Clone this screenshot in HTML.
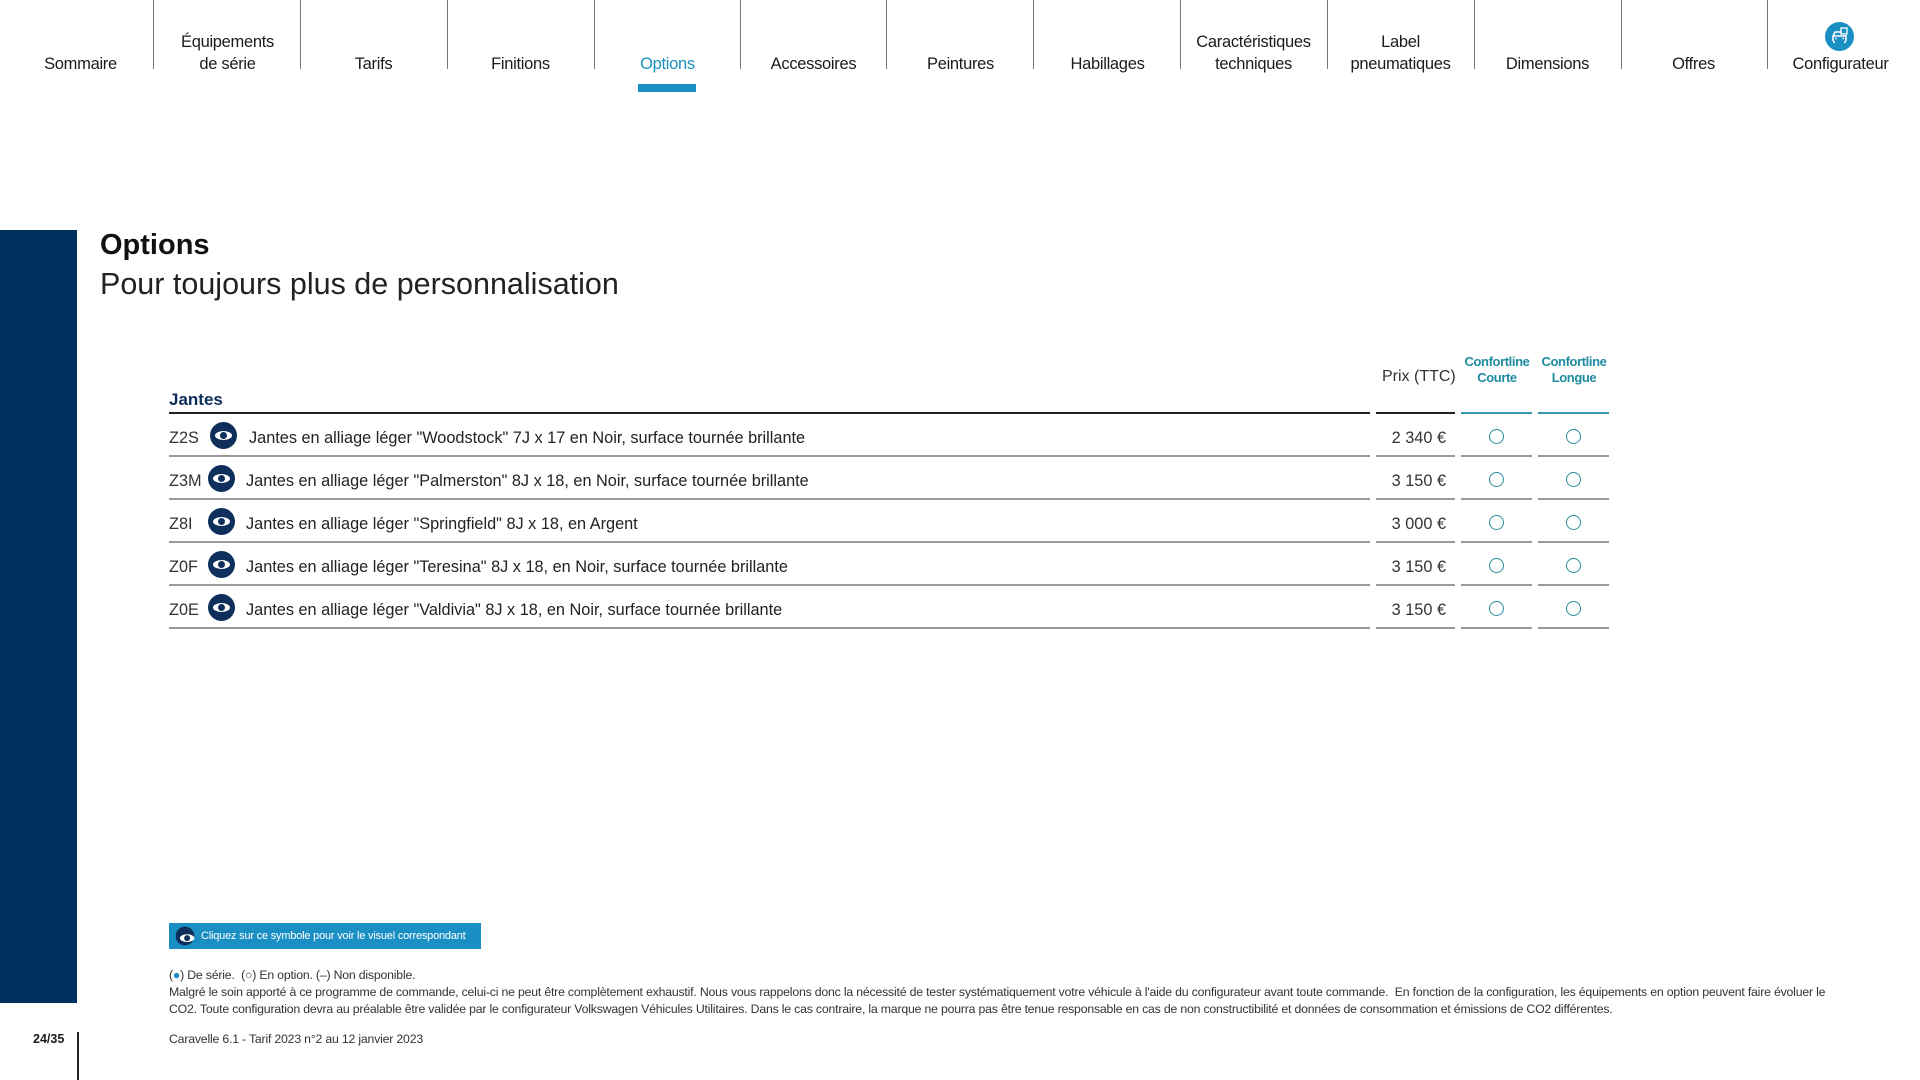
<!DOCTYPE html>
<html><head><meta charset="utf-8"><style>
*{margin:0;padding:0;box-sizing:border-box}
body{width:1920px;height:1080px;background:#fff;font-family:"Liberation Sans",sans-serif;color:#1b1b1b;position:relative;overflow:hidden}
.nav{position:absolute;top:0;left:0;width:1920px;height:100px}
.it{position:absolute;top:0;width:147px;height:75px;text-align:center;font-size:16.5px;line-height:22px;letter-spacing:-0.3px;display:flex;flex-direction:column;justify-content:flex-end}
.sep{position:absolute;top:0;width:1px;height:69px;background:#777}
.a{position:absolute;font-size:16.3px;white-space:nowrap}
.ln{position:absolute;height:2px;background:#999}
.eye{position:absolute;width:27px;height:27px;border-radius:50%;background:#0e2f5c}
.eye:before{content:"";position:absolute;left:5px;top:9px;width:17px;height:9px;border-radius:50%;background:#fff}
.eye:after{content:"";position:absolute;left:10px;top:10px;width:7px;height:7px;border-radius:50%;background:#0e2f5c}
.c{position:absolute;width:15px;height:15px;border:1.5px solid #2a8f9c;border-radius:50%}
.sm{position:absolute;left:169px;font-size:12.3px;color:#333;white-space:nowrap;letter-spacing:-0.2px}
</style></head><body>
<div class="nav">
<div class="it" style="left:7px">Sommaire</div>
<div class="it" style="left:154px">Équipements<br>de série</div>
<div class="it" style="left:300px">Tarifs</div>
<div class="it" style="left:447px">Finitions</div>
<div class="it" style="left:594px;color:#1a8fbf">Options</div>
<div class="it" style="left:740px">Accessoires</div>
<div class="it" style="left:887px">Peintures</div>
<div class="it" style="left:1034px">Habillages</div>
<div class="it" style="left:1180px">Caractéristiques<br>techniques</div>
<div class="it" style="left:1327px">Label<br>pneumatiques</div>
<div class="it" style="left:1474px">Dimensions</div>
<div class="it" style="left:1620px">Offres</div>
<div class="it" style="left:1767px">Configurateur</div>
<div class="sep" style="left:153px"></div><div class="sep" style="left:300px"></div><div class="sep" style="left:447px"></div><div class="sep" style="left:594px"></div><div class="sep" style="left:740px"></div><div class="sep" style="left:886px"></div><div class="sep" style="left:1033px"></div><div class="sep" style="left:1180px"></div><div class="sep" style="left:1327px"></div><div class="sep" style="left:1474px"></div><div class="sep" style="left:1621px"></div><div class="sep" style="left:1767px"></div>
<div style="position:absolute;left:638px;top:84px;width:58px;height:8px;background:#1a8fc4"></div>
<svg style="position:absolute;left:1825px;top:22px" width="29" height="29" viewBox="0 0 29 29"><circle cx="14.5" cy="14.5" r="14.5" fill="#1a8fc4"/><path d="M8 19v-5l2-4h7M8 14h13v5M9 19v2M20 19v2M10 16.5h1.5M17.5 16.5h1.5" stroke="#fff" stroke-width="1.6" fill="none"/><rect x="16" y="6" width="6" height="6" fill="none" stroke="#fff" stroke-width="1.3"/></svg>
</div>
<div style="position:absolute;left:0;top:230px;width:77px;height:773px;background:#00305e"></div>
<div class="a" style="left:100px;top:229px;font-size:29px;font-weight:bold;color:#111">Options</div>
<div class="a" style="left:100px;top:267px;font-size:30.5px;color:#222">Pour toujours plus de personnalisation</div>
<div class="a" style="left:1382px;top:368px;font-size:16px;color:#333">Prix (TTC)</div>
<div class="a" style="left:1461px;top:354px;width:72px;text-align:center;font-size:13px;line-height:16px;font-weight:bold;color:#1f8ca0;letter-spacing:-0.4px">Confortline<br>Courte</div>
<div class="a" style="left:1538px;top:354px;width:72px;text-align:center;font-size:13px;line-height:16px;font-weight:bold;color:#1f8ca0;letter-spacing:-0.4px">Confortline<br>Longue</div>
<div class="a" style="left:169px;top:390px;font-size:17px;font-weight:bold;color:#0e2f5c">Jantes</div>
<div class="ln" style="left:169px;top:412px;width:1201px;background:#222"></div>
<div class="ln" style="left:1376px;top:412px;width:79px;background:#222"></div>
<div class="ln" style="left:1461px;top:412px;width:71px;background:#3a9bb0"></div>
<div class="ln" style="left:1538px;top:412px;width:71px;background:#3a9bb0"></div>
<div id="rows"></div>
<script>
var d=[["Z2S",'Jantes en alliage léger "Woodstock" 7J x 17 en Noir, surface tournée brillante',"2 340 €",223,249],
["Z3M",'Jantes en alliage léger "Palmerston" 8J x 18, en Noir, surface tournée brillante',"3 150 €",221,246],
["Z8I",'Jantes en alliage léger "Springfield" 8J x 18, en Argent',"3 000 €",221,246],
["Z0F",'Jantes en alliage léger "Teresina" 8J x 18, en Noir, surface tournée brillante',"3 150 €",221,246],
["Z0E",'Jantes en alliage léger "Valdivia" 8J x 18, en Noir, surface tournée brillante',"3 150 €",221,246]];
var h="";d.forEach(function(r,i){var y=415+i*43.1;
h+='<div class="a" style="left:169px;top:'+(y+14)+'px;color:#333">'+r[0]+'</div>';
h+='<div class="eye" style="left:'+(r[3]-13)+'px;top:'+(y+7)+'px"></div>';
h+='<div class="a" style="left:'+r[4]+'px;top:'+(y+14)+'px;color:#222">'+r[1]+'</div>';
h+='<div class="a" style="left:1376px;width:70px;text-align:right;top:'+(y+14)+'px;color:#333">'+r[2]+'</div>';
h+='<div class="c" style="left:1489px;top:'+(y+14)+'px"></div><div class="c" style="left:1566px;top:'+(y+14)+'px"></div>';
var ly=y+40;
h+='<div class="ln" style="left:169px;top:'+ly+'px;width:1201px"></div><div class="ln" style="left:1376px;top:'+ly+'px;width:79px"></div><div class="ln" style="left:1461px;top:'+ly+'px;width:71px"></div><div class="ln" style="left:1538px;top:'+ly+'px;width:71px"></div>';});
document.getElementById("rows").innerHTML=h;
</script>
<div style="position:absolute;left:169px;top:923px;width:312px;height:26px;background:#1a8fc4"></div>
<div class="eye" style="left:174px;top:925px;width:22px;height:22px;transform:scale(.85)"></div>
<div class="a" style="left:201px;top:930px;font-size:11px;color:#fff;letter-spacing:-0.2px">Cliquez sur ce symbole pour voir le visuel correspondant</div>
<div class="sm" style="top:968px">(<span style="color:#1a8fc4">●</span>) De série.&nbsp; (○) En option. (–) Non disponible.</div>
<div class="sm" style="top:985px">Malgré le soin apporté à ce programme de commande, celui-ci ne peut être complètement exhaustif. Nous vous rappelons donc la nécessité de tester systématiquement votre véhicule à l'aide du configurateur avant toute commande.&nbsp; En fonction de la configuration, les équipements en option peuvent faire évoluer le</div>
<div class="sm" style="top:1002px">CO2. Toute configuration devra au préalable être validée par le configurateur Volkswagen Véhicules Utilitaires. Dans le cas contraire, la marque ne pourra pas être tenue responsable en cas de non constructibilité et données de consommation et émissions de CO2 différentes.</div>
<div class="sm" style="top:1032px">Caravelle 6.1 - Tarif 2023 n°2 au 12 janvier 2023</div>
<div class="a" style="left:33px;top:1032px;font-size:12.5px;font-weight:bold">24/35</div>
<div style="position:absolute;left:77px;top:1032px;width:1.5px;height:48px;background:#222"></div>
</body></html>
